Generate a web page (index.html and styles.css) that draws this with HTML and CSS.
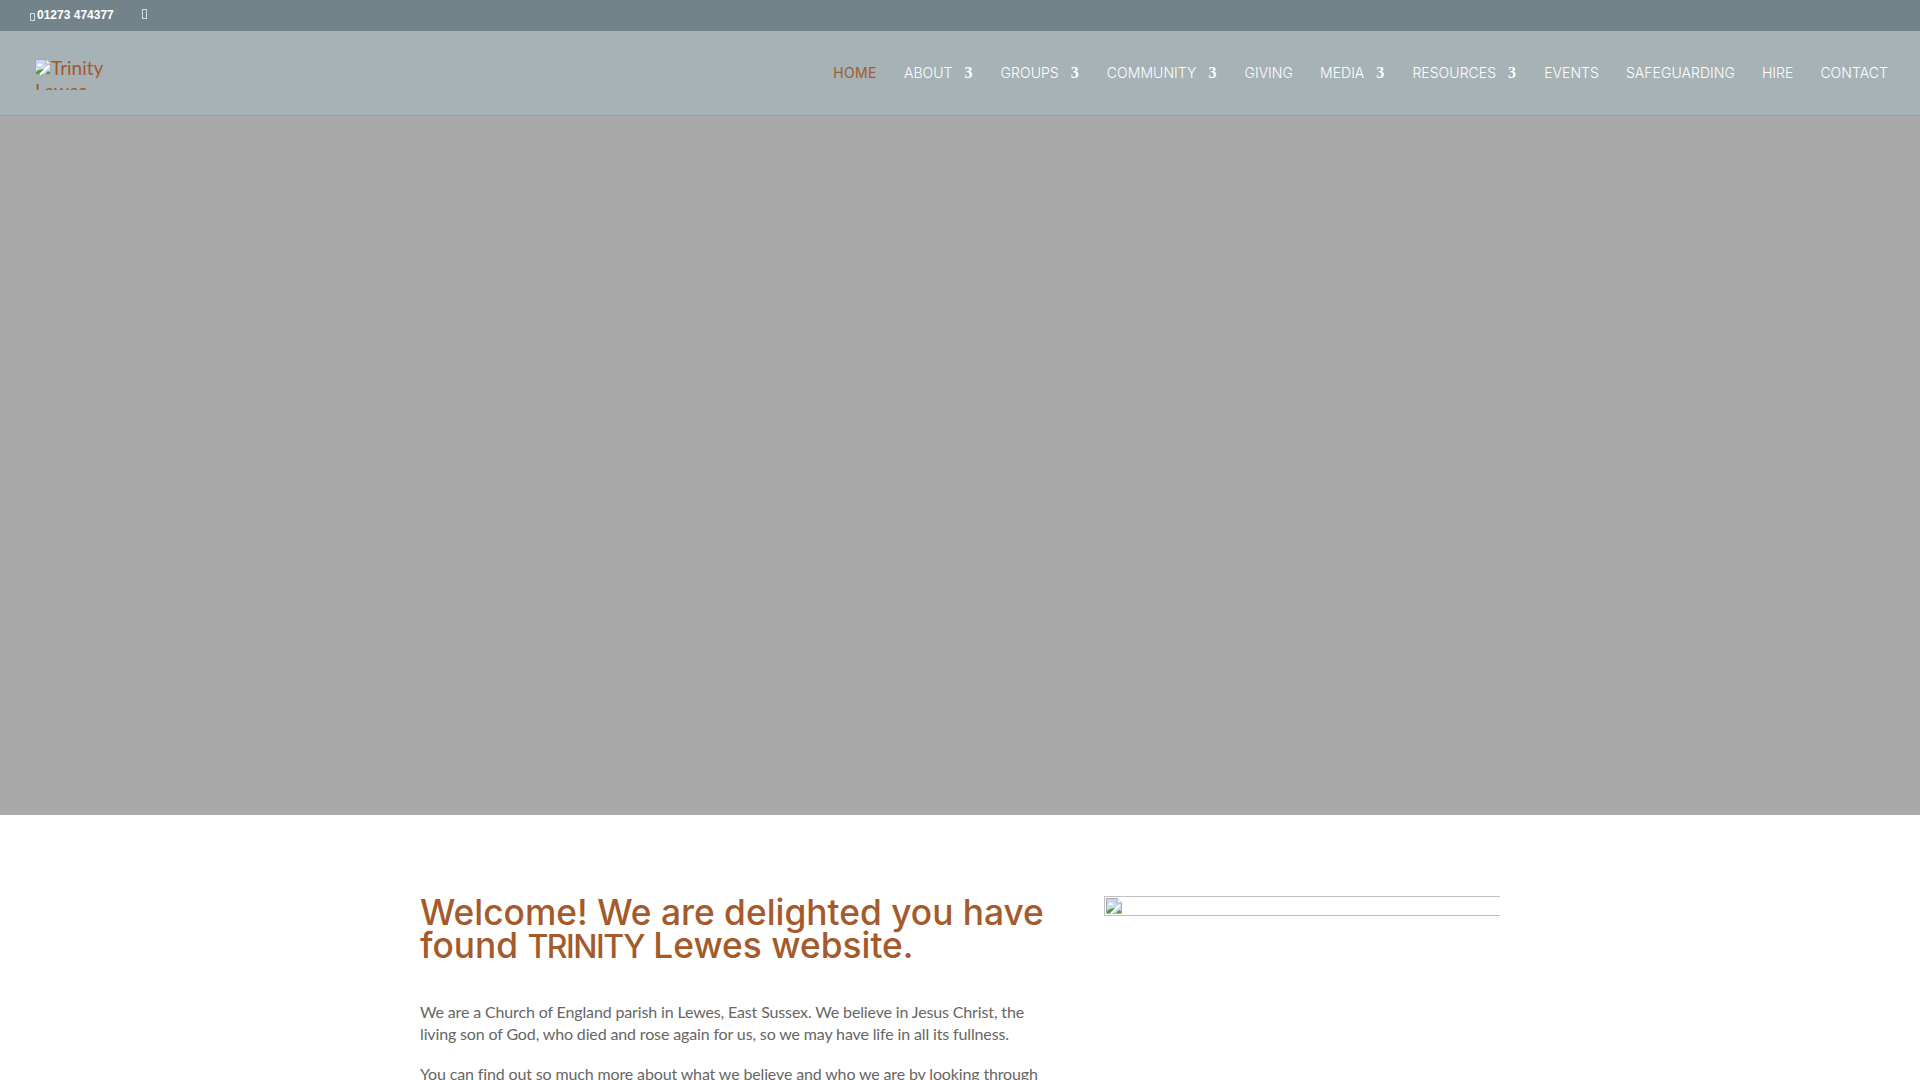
FILE: index.html
```html
<!DOCTYPE html>
<html lang="en">
  <head>
    <meta charset="UTF-8" />
    <meta name="viewport" content="width=device-width, initial-scale=1.0" />
    <title>Trinity Lewes</title>
    <link rel="stylesheet" href="styles.css">
  </head>
  <body>
    <div class="top-bar">
      <span class="phone"><span class="tofu tofu-phone"></span>01273 474377</span>
      <span class="tofu tofu-social"></span>
    </div>

    <header class="site-header">
      <a class="logo" href="#">
        <svg class="broken-img" viewBox="0 0 16 16" width="16" height="16" aria-hidden="true">
          <path d="M0.5 0.5H11L15.500 5V15.500H0.5Z" fill="#c9d8f5" stroke="#a8a8a8" />
          <path d="M11 0.5V5H15.500" fill="#fff" stroke="#a8a8a8" />
          <path d="M3 5.500C3.500 4 6 4 6.500 5.500C8 5.500 8 7 6.500 7H3C1.800 7 1.800 5.500 3 5.500Z" fill="#fff" />
          <path d="M1 15V13C3 11 6 10 9 10.500L5 15Z" fill="#4fa02f" />
          <path d="M10 15L13 12L15 13V15Z" fill="#4fa02f" />
          <path d="M5 15.500L14 7" stroke="#fff" stroke-width="2" />
        </svg>Trinity Lewes
      </a>
      <nav class="main-nav">
        <a class="nav-link current" href="#">HOME</a>
        <a class="nav-link has-sub" href="#">ABOUT</a>
        <a class="nav-link has-sub" href="#">GROUPS</a>
        <a class="nav-link has-sub" href="#">COMMUNITY</a>
        <a class="nav-link" href="#">GIVING</a>
        <a class="nav-link has-sub" href="#">MEDIA</a>
        <a class="nav-link has-sub" href="#">RESOURCES</a>
        <a class="nav-link" href="#">EVENTS</a>
        <a class="nav-link" href="#">SAFEGUARDING</a>
        <a class="nav-link" href="#">HIRE</a>
        <a class="nav-link" href="#">CONTACT</a>
      </nav>
    </header>

    <section class="hero"></section>

    <main class="welcome">
      <div class="welcome-text">
        <h1>Welcome! We are delighted you have found <span class="caps">TRINITY</span> Lewes website.</h1>
        <p>We are a Church of England parish in Lewes, East Sussex. We believe in Jesus Christ, the living son of God, who died and rose again for us, so we may have life in all its fullness.</p>
        <p>You can find out so much more about what we believe and who we are by looking through</p>
      </div>
      <div class="welcome-image">
        <svg class="broken-img" viewBox="0 0 16 16" width="16" height="16" aria-hidden="true">
          <path d="M0.5 0.5H11L15.500 5V15.500H0.5Z" fill="#c9d8f5" stroke="#a8a8a8" />
          <path d="M11 0.5V5H15.500" fill="#fff" stroke="#a8a8a8" />
          <path d="M3 5.500C3.500 4 6 4 6.500 5.500C8 5.500 8 7 6.500 7H3C1.800 7 1.800 5.500 3 5.500Z" fill="#fff" />
          <path d="M1 15V13C3 11 6 10 9 10.500L5 15Z" fill="#4fa02f" />
          <path d="M10 15L13 12L15 13V15Z" fill="#4fa02f" />
          <path d="M5 15.500L14 7" stroke="#fff" stroke-width="2" />
        </svg>
      </div>
    </main>
  </body>
</html>
```

FILE: styles.css
```css
*,
*::before,
*::after {
  box-sizing: border-box;
}

html,
body {
  height: 100%;
}

body {
  margin: 0;
  overflow: hidden;
  background-color: #fff;
  font-family: Lato, sans-serif;
}

a {
  text-decoration: none;
}

.top-bar {
  display: flex;
  align-items: center;
  height: 31px;
  padding: 0 0 2px 30px;
  background-color: #72848a;
  color: #fff;
  font-family: "Liberation Sans", Arial, sans-serif;
  font-size: 12px;
  font-weight: 700;
}

.phone {
  display: flex;
  align-items: center;
}

.tofu {
  display: inline-block;
  border: 1px solid rgba(255, 255, 255, 0.7);
}

.tofu-phone {
  width: 5px;
  height: 8px;
  margin: 4px 2px 0 0;
}

.tofu-social {
  width: 5px;
  height: 10px;
  margin: -1px 0 0 28px;
}

.site-header {
  display: flex;
  align-items: center;
  justify-content: space-between;
  height: 85px;
  padding: 0 32px 0 35px;
  background-color: #a6b2b6;
  border-bottom: 1px solid #939c9f;
}

.logo {
  display: block;
  width: 70px;
  height: 34px;
  margin-top: -1px;
  overflow: hidden;
  color: #a45a2a;
  font-size: 19px;
  line-height: 23px;
}

.broken-img {
  display: inline-block;
}

.main-nav {
  display: flex;
  gap: 27px;
}

.nav-link {
  color: #fff;
  font-family: Inter, sans-serif;
  font-size: 14px;
  font-weight: 300;
  letter-spacing: 0.05px;
  line-height: 20px;
}

.nav-link.current {
  color: #a45a2a;
  font-weight: 400;
  letter-spacing: 0.4px;
}

.nav-link.has-sub::after {
  content: "3";
  margin: 0 1px 0 12px;
  font-family: "Liberation Serif", serif;
  font-size: 16px;
  font-weight: 700;
}

.hero {
  height: 699px;
  background-color: #a9a9a9;
}

.welcome {
  display: flex;
  gap: 54px;
  width: 1080px;
  margin-left: 420px;
  padding-top: 81px;
}

.welcome-text {
  width: 630px;
  color: #666;
  font-size: 16px;
  letter-spacing: -0.14px;
  line-height: 22px;
}

.welcome-text h1 {
  margin: 0 0 38px;
  color: #a45a2a;
  font-family: Inter, sans-serif;
  font-size: 35.300px;
  font-weight: 500;
  letter-spacing: 0;
  line-height: 33px;
}

.welcome-text h1 .caps {
  font-size: 32px;
  letter-spacing: -1.5px;
}

.welcome-text p {
  margin: 0 0 18px;
}

.welcome-image {
  flex: 1;
  height: 20px;
  padding: 1px;
  border: 1px solid #c0c0c0;
  border-right: 0;
}
```
